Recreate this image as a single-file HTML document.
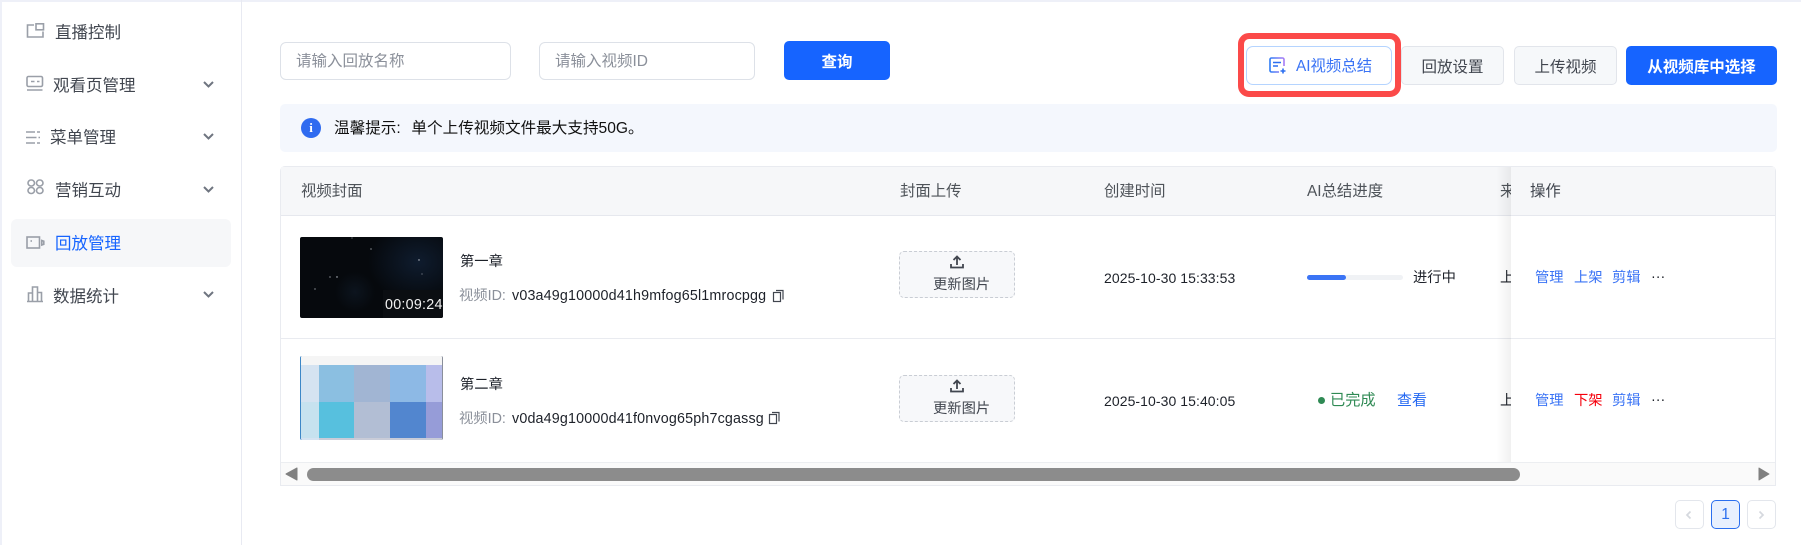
<!DOCTYPE html>
<html lang="zh"><head><meta charset="utf-8"><style>
*{box-sizing:border-box}
html,body{margin:0;padding:0;width:1801px;height:545px;overflow:hidden;background:#fff;font-family:"Liberation Sans","Noto Sans CJK SC",sans-serif;color:#1d2129}
.a{position:absolute}
.t{position:absolute;white-space:nowrap;line-height:20px;height:20px}
.m{font-size:16.5px;color:#41464f}
.btn{position:absolute;display:flex;align-items:center;justify-content:center;border-radius:5px;font-size:15.5px;white-space:nowrap}
.g{background:#f6f8fa;border:1px solid #e2e5eb;color:#41464f}
.p{background:#1664ff;color:#fff;font-weight:bold}
.inp{position:absolute;border:1px solid #dde1e8;border-radius:6px;background:#fff;color:#8b909a;font-size:15.5px;line-height:38px;padding-left:15px;height:38px;top:42px}
.h{font-size:15.4px;color:#4e5359;top:182px}
.r{font-size:14.3px;color:#1d2129}
.d{font-size:14px;letter-spacing:.07px}
.up{position:absolute;left:899px;width:116px;height:47px;background:#f7f8fa;border:1px dashed #c9cdd4;border-radius:5px}
.bl{color:#3b74f5}
</style></head><body>
<div class="a" style="left:0;top:0;width:1801px;height:2px;background:#eef0f8"></div>
<div class="a" style="left:0;top:0;width:2px;height:545px;background:#eef0f8"></div>
<div class="a" style="left:241px;top:0;width:1px;height:545px;background:#e8eaf2"></div>

<div class="a" style="left:11px;top:219px;width:220px;height:48px;background:#f6f7f9;border-radius:6px"></div>
<svg class="a" style="left:0;top:0" width="242" height="320" fill="none" stroke="#9a9fa8" stroke-width="1.6">
<path d="M34 25H27.500V37H43V31.500"/><rect x="36" y="23.800" width="7.500" height="6"/>
<rect x="27" y="76.500" width="15.500" height="10" rx="1.500"/><path d="M31 81.500h3.500M37 81.500h2.500M27 90h15.500"/>
<path d="M26 132h9M37 132h3M26 137.500h10.500M38.500 137.500h1.500M26 143h9M37 143h3"/>
<rect x="28" y="180" width="6.500" height="6" rx="3"/><rect x="36.500" y="180" width="6.500" height="6" rx="3"/><rect x="28" y="187.500" width="6.500" height="6" rx="3"/><rect x="36.500" y="187.500" width="6.500" height="6" rx="3"/>
<rect x="27" y="237" width="12.500" height="11"/><path d="M41.800 240.500v4.500l2-.7v-3.100z"/><path d="M30.500 241h1.500"/>
<path d="M27 301.500h16M28.500 301v-8h4v8M32.500 301v-14h5v14M37.500 292.500h4v8.500"/>
</svg>
<svg class="a" style="left:200px;top:0" width="20" height="310" fill="none" stroke="#6f7580" stroke-width="2"><path d="M4 82l4.500 4.500 4.500-4.500M4 134l4.500 4.500 4.500-4.500M4 187l4.500 4.500 4.500-4.500M4 292l4.500 4.500 4.500-4.500"/></svg>
<div class="t m" style="left:55px;top:23px">直播控制</div>
<div class="t m" style="left:53px;top:76px">观看页管理</div>
<div class="t m" style="left:50px;top:128px">菜单管理</div>
<div class="t m" style="left:55px;top:181px">营销互动</div>
<div class="t m" style="left:55px;top:234px;color:#1664ff">回放管理</div>
<div class="t m" style="left:53px;top:287px">数据统计</div>

<div class="inp" style="left:280px;width:231px">请输入回放名称</div>
<div class="inp" style="left:539px;width:216px">请输入视频ID</div>
<div class="btn p" style="left:784px;top:41px;width:106px;height:39px">查询</div>

<div class="a" style="left:1238px;top:33px;width:163px;height:64px;border:6px solid #fb4a49;border-radius:11px"></div>
<div class="a" style="left:1246px;top:46px;width:146px;height:39px;border:1px solid #b5d4ff;border-radius:7px"></div>
<svg class="a" style="left:1268px;top:56px" width="20" height="20" fill="none" stroke-width="1.600"><defs><linearGradient id="ai" x1="0" x2="1"><stop offset="0" stop-color="#2c7bf5"/><stop offset="1" stop-color="#a77bf5"/></linearGradient></defs><path d="M11 16H3.500A1.500 1.500 0 0 1 2 14.500V3.500A1.500 1.500 0 0 1 3.500 2h11A1.500 1.500 0 0 1 16 3.500V10" stroke="url(#ai)"/><path d="M5 6.500h8M5 10h5" stroke="#2c6ff0"/><path d="M15 12.500v5M12.500 15h5" stroke="#2c6ff0"/></svg>
<div class="t" style="left:1296px;top:57px;font-size:15.400px;color:#3b74f5">AI视频总结</div>
<div class="btn g" style="left:1401px;top:46px;width:103px;height:39px">回放设置</div>
<div class="btn g" style="left:1514px;top:46px;width:103px;height:39px">上传视频</div>
<div class="btn p" style="left:1626px;top:46px;width:151px;height:39px">从视频库中选择</div>

<div class="a" style="left:280px;top:104px;width:1497px;height:48px;background:#f4f7fd;border-radius:5px"></div>
<div class="a" style="left:301px;top:118px;width:20px;height:20px;border-radius:50%;background:#2f6bf0;color:#fff;font:bold 13px/20px 'Liberation Serif',serif;text-align:center">i</div>
<div class="t" style="left:334px;top:119px;font-size:15.600px;color:#111">温馨提示:<span style="margin-left:10.700px">单个上传视频文件最大支持50G。</span></div>

<div class="a" style="left:280px;top:166px;width:1496px;height:320px;border:1px solid #e9ebf0;border-radius:5px 5px 0 0"></div>
<div class="a" style="left:281px;top:167px;width:1494px;height:49px;background:#f6f7f9;border-bottom:1px solid #e6e8ee"></div>
<div class="a" style="left:281px;top:338px;width:1230px;height:1px;background:#e9ebf0"></div>
<div class="t h" style="left:301px">视频封面</div>
<div class="t h" style="left:900px">封面上传</div>
<div class="t h" style="left:1104px">创建时间</div>
<div class="t h" style="left:1307px">AI总结进度</div>
<div class="t h" style="left:1500px">来源</div>

<div class="a" style="left:300px;top:237px;width:143px;height:81px;border-radius:2px;background:radial-gradient(ellipse 50px 40px at 118px 25px,#0f1c2e,transparent),radial-gradient(ellipse 20px 20px at 55px 55px,#0c141e,transparent),#06090d;overflow:hidden">
<div class="a" style="left:83px;top:53px;width:60px;height:28px;background:#0b0e12"></div>
<div class="t" style="left:85px;top:58px;font-size:14.300px;color:#f2f2f2;letter-spacing:.25px">00:09:24</div>
<svg class="a" style="left:0;top:0" width="143" height="55"><g fill="#c9ced6"><circle cx="37" cy="40" r=".7"/><circle cx="71" cy="12" r=".6"/><circle cx="119" cy="23" r=".7"/><circle cx="30" cy="40" r=".6"/><circle cx="15" cy="52" r=".6"/><circle cx="122" cy="37" r=".5"/><circle cx="52" cy="1" r=".5"/></g></svg>
</div>
<div class="t r" style="left:460px;top:252px">第一章</div>
<div class="t r" style="left:459px;top:286px;color:#8b909a">视频ID:</div>
<div class="t r" style="left:512px;top:286px;letter-spacing:.17px">v03a49g10000d41h9mfog65l1mrocpgg</div>
<svg class="a" style="left:772px;top:289px" width="13" height="14" fill="none" stroke="#41464f" stroke-width="1.200"><rect x="1.500" y="3.500" width="7" height="9"/><path d="M4 1.500h7v9"/></svg>

<div class="a" style="left:300px;top:356px;width:143px;height:84px;border-radius:2px;overflow:hidden;background:#d5e3f1;border-left:1px solid #3d87c7;border-right:1px solid #8a8f9b">
<div class="a" style="left:0;top:0;width:143px;height:9px;background:#f5f5f5"></div>
<div class="a" style="left:0;top:9px;width:18px;height:36px;background:#d5e3f1"></div>
<div class="a" style="left:18px;top:9px;width:35px;height:37px;background:#8bbfe1"></div>
<div class="a" style="left:53px;top:9px;width:36px;height:37px;background:#a1b5d3"></div>
<div class="a" style="left:89px;top:9px;width:36px;height:37px;background:#8db9e5"></div>
<div class="a" style="left:125px;top:9px;width:18px;height:37px;background:#b8bdea"></div>
<div class="a" style="left:0;top:46px;width:18px;height:36px;background:#c6e2ef"></div>
<div class="a" style="left:18px;top:46px;width:35px;height:36px;background:#57c0de"></div>
<div class="a" style="left:53px;top:46px;width:36px;height:38px;background:#b2bed4"></div>
<div class="a" style="left:89px;top:46px;width:36px;height:36px;background:#5286cf"></div>
<div class="a" style="left:125px;top:46px;width:18px;height:36px;background:#969cd8"></div>
<div class="a" style="left:18px;top:82px;width:125px;height:2px;background:#c9ccd8"></div>
</div>
<div class="t r" style="left:460px;top:375px">第二章</div>
<div class="t r" style="left:459px;top:409px;color:#8b909a">视频ID:</div>
<div class="t r" style="left:512px;top:409px;letter-spacing:.17px">v0da49g10000d41f0nvog65ph7cgassg</div>
<svg class="a" style="left:768px;top:411px" width="13" height="14" fill="none" stroke="#41464f" stroke-width="1.200"><rect x="1.500" y="3.500" width="7" height="9"/><path d="M4 1.500h7v9"/></svg>

<div class="up" style="top:251px"></div>
<svg class="a" style="left:948px;top:254px" width="18" height="16" fill="none" stroke="#41464f" stroke-width="1.800"><path d="M9 11V2.500M5.500 6L9 2.500 12.500 6M3 10v3.500h12V10"/></svg>
<div class="t r" style="left:933px;top:275px;color:#41464f">更新图片</div>
<div class="up" style="top:375px"></div>
<svg class="a" style="left:948px;top:378px" width="18" height="16" fill="none" stroke="#41464f" stroke-width="1.800"><path d="M9 11V2.500M5.500 6L9 2.500 12.500 6M3 10v3.500h12V10"/></svg>
<div class="t r" style="left:933px;top:399px;color:#41464f">更新图片</div>

<div class="t r d" style="left:1104px;top:268px">2025-10-30 15:33:53</div>
<div class="t r d" style="left:1104px;top:391px">2025-10-30 15:40:05</div>
<div class="a" style="left:1307px;top:275px;width:96px;height:5px;border-radius:3px;background:#f0f2f5"></div>
<div class="a" style="left:1307px;top:275px;width:39px;height:5px;border-radius:3px;background:#3b74f5"></div>
<div class="t r" style="left:1413px;top:268px">进行中</div>
<div class="a" style="left:1318px;top:397px;width:7px;height:7px;border-radius:50%;background:#2f8a54"></div>
<div class="t" style="left:1330px;top:391px;font-size:15.200px;color:#2f8a54">已完成</div>
<div class="t" style="left:1397px;top:391px;font-size:15px;color:#2468f2">查看</div>
<div class="t r" style="left:1500px;top:268px">上架</div>
<div class="t r" style="left:1500px;top:391px">上架</div>

<div class="a" style="left:1496px;top:167px;width:15px;height:295px;background:linear-gradient(to left,rgba(0,0,0,.06),transparent)"></div>
<div class="a" style="left:1511px;top:167px;width:264px;height:49px;background:#f6f7f9;border-bottom:1px solid #e6e8ee"></div>
<div class="a" style="left:1511px;top:216px;width:264px;height:246px;background:#fff"></div>
<div class="a" style="left:1511px;top:338px;width:264px;height:1px;background:#e9ebf0"></div>
<div class="t h" style="left:1530px;color:#41464f">操作</div>
<div class="t r bl" style="left:1535px;top:268px">管理</div><div class="t r bl" style="left:1574px;top:268px">上架</div><div class="t r bl" style="left:1612px;top:268px">剪辑</div><div class="t r" style="left:1651px;top:267px">···</div>
<div class="t r bl" style="left:1535px;top:391px">管理</div><div class="t r" style="left:1574px;top:391px;color:#f5000c">下架</div><div class="t r bl" style="left:1612px;top:391px">剪辑</div><div class="t r" style="left:1651px;top:390px">···</div>

<div class="a" style="left:281px;top:462px;width:1494px;height:23px;background:#fafafa;border-top:1px solid #eceef1"></div>
<div class="a" style="left:307px;top:468px;width:1213px;height:13px;border-radius:7px;background:#8c8c8c"></div>
<svg class="a" style="left:284px;top:467px" width="16" height="16"><path d="M13 1v12L2 7z" fill="#808080" stroke="#808080" stroke-linejoin="round"/></svg>
<svg class="a" style="left:1757px;top:467px" width="16" height="16"><path d="M2 1v12L12 7z" fill="#808080" stroke="#808080" stroke-linejoin="round"/></svg>

<div class="a" style="left:1675px;top:500px;width:29px;height:29px;border:1px solid #e3e6ec;border-radius:5px"></div>
<svg class="a" style="left:1684px;top:510px" width="10" height="10" fill="none" stroke="#d5d8de" stroke-width="1.700"><path d="M6.500 1.500L3 5l3.500 3.500"/></svg>
<div class="a" style="left:1711px;top:500px;width:29px;height:29px;border:1px solid #2b6fef;border-radius:5px;background:#e8f0fe;color:#2b6fef;font-size:15.500px;line-height:27px;text-align:center">1</div>
<div class="a" style="left:1747px;top:500px;width:29px;height:29px;border:1px solid #e3e6ec;border-radius:5px"></div>
<svg class="a" style="left:1756px;top:510px" width="10" height="10" fill="none" stroke="#d5d8de" stroke-width="1.700"><path d="M3.500 1.500L7 5 3.500 8.500"/></svg>
</body></html>
